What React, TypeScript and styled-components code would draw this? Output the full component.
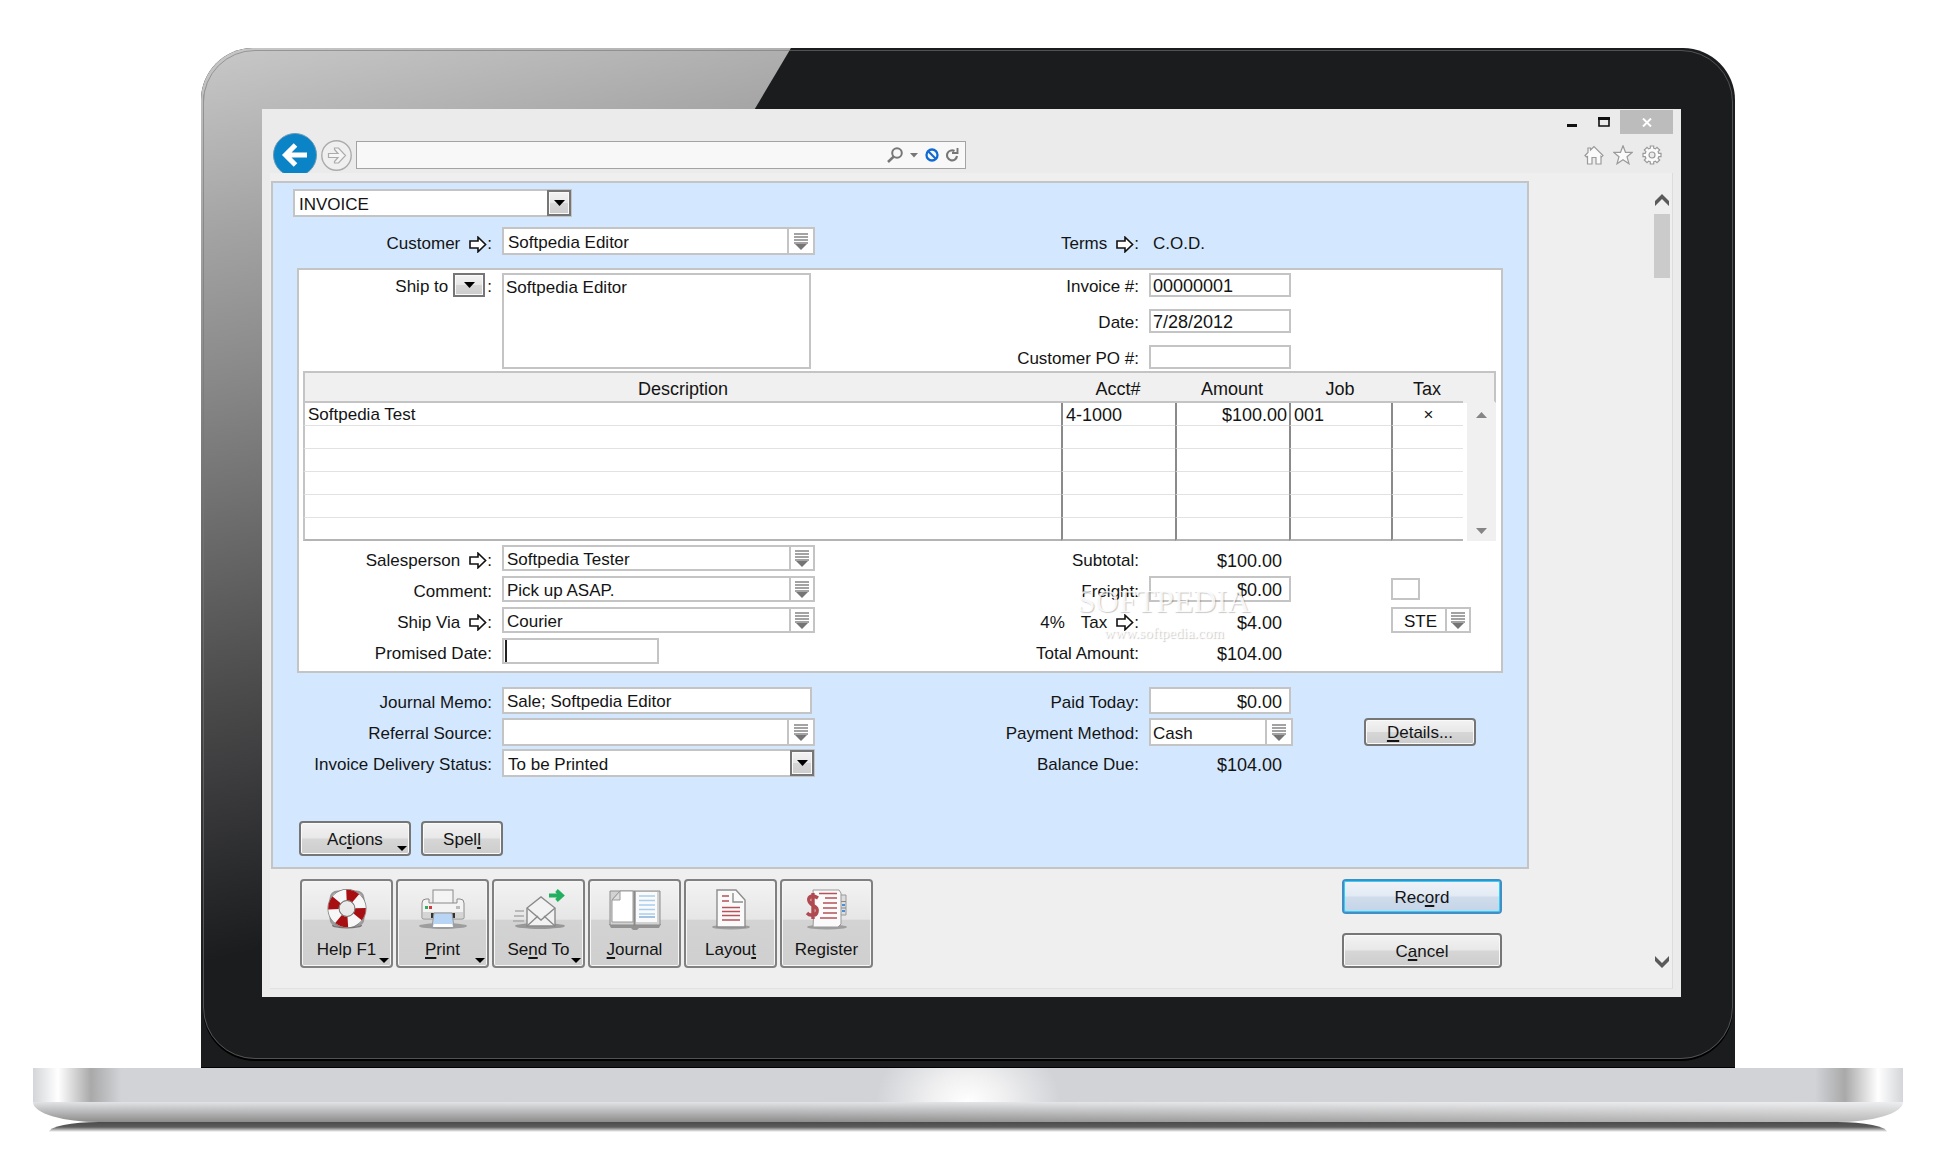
import React from "react";
import styled, { createGlobalStyle, css } from "styled-components";

const line = "#c4c4c4";
const ink = "#141414";

const GlobalStyle = createGlobalStyle`
  *, *::before, *::after { box-sizing: border-box; }
  body {
    margin: 0;
    background: #fff;
    color: ${ink};
    font: 17px/24px "Liberation Sans", Arial, sans-serif;
  }
  button, input, select, textarea { font: inherit; color: inherit; margin: 0; }
  u { text-decoration-thickness: 2px; text-underline-offset: 2px; }
`;

/* ---------- laptop ---------- */

const Page = styled.div`
  padding: 48px 30px 40px 33px;
`;

const Lid = styled.div`
  position: relative;
  margin: 0 168px;
  padding: 61px 54px 70px 61px;
  background: #1b1c1e;
  border: solid #000;
  border-width: 0 0 1px;
  border-radius: 52px 52px 0 0;
`;

const Gloss = styled.div`
  position: absolute;
  inset: 0;
  border-radius: 52px 0 0 0;
  background: linear-gradient(168deg, #c8c8c8 0, #a3a3a4 14%, #8b8b8b 24%, #4c4c4d 48%, #1b1c1e 68%);
  clip-path: polygon(0 0, 590px 0, 0 992px);
`;

const Rim = styled.div`
  position: absolute;
  inset: 2px 2px 8px;
  border: 1px solid #77777799;
  border-radius: 52px;
  box-shadow: 0 2px 0 #000;
`;

const Base = styled.div`
  height: 34px;
  background:
    linear-gradient(90deg, #d3d5d8 0, #fff 25px, #a9a9a9 58px, #d1d3d700 88px) left / 90px 100% no-repeat,
    linear-gradient(270deg, #d3d5d8 0, #fff 25px, #a9a9a9 58px, #d1d3d700 88px) right / 90px 100% no-repeat,
    radial-gradient(ellipse 92px 70px at 50% 100%, #fff 0, #f0f0f1 40%, #d1d3d700 100%),
    #d1d3d7;
`;

const Belly = styled.div`
  height: 20px;
  border-radius: 0 0 66px 66px / 0 0 20px 20px;
  background:
    linear-gradient(90deg, #fff0 40%, #ffffff66 100%),
    linear-gradient(#e2e3e6, #8c8c8c);
`;

const Shade = styled.div`
  height: 10px;
  margin: 0 16px;
  border-radius: 50px 50px 0 0 / 10px 10px 0 0;
  background: linear-gradient(#4b4b4b, #5c5c5c 50%, #fff);
`;

/* ---------- browser window ---------- */

const Window = styled.div`
  position: relative;
  background: #ebebeb;
  padding: 0 8px 8px;
`;

const TitleBar = styled.div`
  display: flex;
  justify-content: flex-end;
  height: 24px;
  padding-top: 1px;
`;

const WindowButton = styled.button<{ $close?: boolean }>`
  display: grid;
  place-items: center;
  width: ${(p) => (p.$close ? 53 : 32)}px;
  height: 24px;
  padding: 0;
  border: 0;
  background: ${(p) => (p.$close ? "#bcbcbc" : "none")};
`;

const NavBar = styled.div`
  height: 40px;
  overflow: hidden;
`;

const NavRow = styled.div`
  display: flex;
  align-items: center;
  gap: 4px;
  height: 44px;
  padding: 0 11px 0 3px;
`;

const BareButton = styled.button`
  display: flex;
  padding: 0;
  border: 0;
  background: none;
`;

const Address = styled.div`
  display: flex;
  align-items: center;
  gap: 7px;
  width: 610px;
  height: 28px;
  padding-right: 6px;
  border: 1px solid #a3a3a3;
  background: #f8f8f8;
`;

const ToolIcons = styled.div`
  display: flex;
  gap: 9px;
  margin-left: auto;
`;

const Viewport = styled.div`
  display: flex;
  justify-content: space-between;
  background: #efefef;
  border-right: 1px solid #dcdcdc;
  border-bottom: 1px solid #e2e2e2;
`;

const Content = styled.main`
  flex: 1;
  margin: 8px 125px 20px 1px;
`;

const ScrollBar = styled.div`
  display: flex;
  flex-direction: column;
  align-items: center;
  width: 18px;
  padding: 21px 2px 20px 0;
`;

const Thumb = styled.div`
  width: 16px;
  height: 64px;
  margin: 8px 0 auto;
  background: #cbcbcb;
`;

/* ---------- form ---------- */

const Panel = styled.form`
  border: 2px solid ${line};
  background: #d3e8fe;
  padding: 6px 0 11px;
`;

const TypeRow = styled.div`
  padding: 0 20px 10px;
`;

const Section = styled.div`
  padding: 0 24px;
`;

const Sheet = styled.div`
  margin: 10px 24px 14px;
  padding: 5px 0 4px;
  background: #fff;
  box-shadow: inset 0 0 0 2px ${line};
`;

const Label = styled.label<{ $right?: boolean }>`
  display: flex;
  align-items: center;
  justify-content: flex-end;
  grid-column: ${(p) => (p.$right ? 3 : 1)};
  white-space: nowrap;
`;

const Grid = styled.div<{ $tight?: boolean; $drop?: boolean }>`
  position: relative;
  display: grid;
  grid-template-columns: 195px 313px minmax(0, 1fr) 144px 200px;
  column-gap: 10px;
  ${(p) =>
    p.$tight
      ? css`grid-auto-rows: 24px; row-gap: 12px;`
      : css`grid-auto-rows: 31px;`}

  ${Label}, output {
    padding-top: ${(p) => (p.$drop ? 3 : 0)}px;
  }
`;

const Cell = styled.div<{ $col: number; $indent?: number; $rows?: number }>`
  grid-column: ${(p) => p.$col};
  grid-row: span ${(p) => p.$rows || 1};
  padding-left: ${(p) => p.$indent || 0}px;
`;

const Frame = styled.div<{ $w?: number; $h: number }>`
  display: flex;
  width: ${(p) => (p.$w ? p.$w + "px" : "100%")};
  height: ${(p) => p.$h}px;
  border: 2px solid ${line};
  background: #fff;
`;

const TextBox = styled.input<{ $figures?: boolean; $end?: boolean; $pad?: number }>`
  flex: 1;
  min-width: 0;
  width: 100%;
  height: 100%;
  padding: 3px ${(p) => (p.$end ? 7 : 0)}px 0 ${(p) => (p.$end ? 0 : p.$pad ?? 3)}px;
  border: 0;
  outline: 0;
  background: none;
  line-height: 20px;
  text-align: ${(p) => (p.$end ? "right" : "left")};
  ${(p) => p.$figures && "font-size: 18px;"}
`;

const ListButton = styled.button<{ $w: number }>`
  display: grid;
  place-items: center;
  width: ${(p) => p.$w}px;
  padding: 0;
  border: 0;
  border-left: 2px solid ${line};
  background: #fff;
`;

const ShipTo = styled.textarea`
  display: block;
  width: 309px;
  height: 96px;
  padding: 1px 2px;
  border: 2px solid ${line};
  outline: 0;
  resize: none;
  background: #fff;
`;

const Caret = styled.span`
  width: 2px;
  margin: 0 0 0 1px;
  background: #222;
`;

const SelectWrap = styled.div<{ $w: number }>`
  position: relative;
  width: ${(p) => p.$w}px;
  height: 28px;

  select {
    appearance: none;
    width: 100%;
    height: 100%;
    padding: 3px 28px 0 4px;
    border: 2px solid ${line};
    border-radius: 0;
    outline: 0;
    background: #fff;
    line-height: 20px;
  }
  span {
    position: absolute;
    right: 1px;
    top: 1px;
    pointer-events: none;
  }
`;

const bevel = css`
  border: 2px solid #767676;
  background: linear-gradient(#f3f3f3, #e8e8e8 48%, #d6d6d6 52%, #cdcdcd);
  box-shadow: inset 0 0 0 1px #fafafa;
`;

const ArrowBox = styled.span`
  display: grid;
  place-items: center;
  width: 24px;
  height: 26px;
  ${bevel}
`;

const ArrowButton = styled.button`
  display: grid;
  place-items: center;
  width: 32px;
  height: 24px;
  padding: 0;
  ${bevel}
`;

const ShipButtonSlot = styled.span`
  margin: -3px 2px 0 5px;
`;

const Figure = styled.output`
  display: flex;
  align-items: center;
  justify-content: flex-end;
  grid-column: 4;
  padding-right: 11px;
  font-size: 18px;
`;

const PlainValue = styled.output`
  display: flex;
  align-items: center;
  grid-column: 4;
  padding-left: 4px;
`;

const TickBox = styled.input`
  display: block;
  appearance: none;
  width: 29px;
  height: 22px;
  margin: 2px 0 0;
  border: 2px solid ${line};
  background: #fff;
`;

const Percent = styled.span`
  margin-right: 16px;
`;

const Watermark = styled.div`
  position: absolute;
  left: 780px;
  top: 38px;
  width: 174px;
  font: 32px/36px "Liberation Serif", serif;
  color: #ffffffdd;
  text-shadow: 1px 1px 1px #00000038;
  text-align: center;
  pointer-events: none;

  small {
    display: block;
    font-size: 15px;
    line-height: 28px;
  }
`;

/* ---------- line items ---------- */

const Items = styled.table`
  width: calc(100% - 13px);
  margin: 2px 7px 4px 6px;
  table-layout: fixed;
  border-spacing: 0;

  th {
    height: 32px;
    padding: 3px 0 0;
    border: solid ${line};
    border-width: 2px 0;
    background: #f0f0f0;
    font-weight: 400;
    font-size: 18px;
    line-height: 24px;
  }
  th:first-child { border-left-width: 2px; }
  th:last-child { border-right-width: 2px; border-bottom-color: #f0f0f0; }
`;

const ItemCell = styled.td<{ $align?: string; $figures?: boolean }>`
  height: 23px;
  padding: 2px 2px 0 3px;
  border-left: 2px solid #8a8a8a;
  border-bottom: 1px solid #e2e2e2;
  line-height: 20px;
  text-align: ${(p) => p.$align || "left"};
  ${(p) => p.$figures && "font-size: 18px;"}

  &:first-child { border-left-color: ${line}; }
  tr:last-child > & { border-bottom: 2px solid #b4b4b4; }
`;

const ScrollCell = styled.td`
  padding: 0 0 0 4px;
  height: 1px;
`;

const ItemScroll = styled.div`
  display: flex;
  flex-direction: column;
  justify-content: space-between;
  align-items: center;
  height: 138px;
  padding: 9px 0 7px;
  background: #f0f0f0;
`;

/* ---------- buttons ---------- */

const PushButton = styled.button<{ $w: number; $h?: number; $primary?: boolean }>`
  position: relative;
  width: ${(p) => p.$w}px;
  height: ${(p) => p.$h || 35}px;
  padding: 2px 0 0;
  border-radius: 4px;
  line-height: 22px;
  ${bevel}
  ${(p) =>
    p.$primary &&
    css`
      border-color: #3f8fc4;
      background: linear-gradient(#f0f3f8, #e2eaf3 48%, #cfdcec 52%, #c4d4e7);
      box-shadow: inset 0 0 0 1px #2fd0fb;
    `}
`;

const ToolButton = styled.button`
  position: relative;
  display: flex;
  flex-direction: column;
  align-items: center;
  gap: 8px;
  width: 93px;
  height: 89px;
  padding: 7px 0 0;
  border: 2px solid #808080;
  border-radius: 4px;
  background: linear-gradient(#f3f3f3, #e6e6e6 45%, #d3d3d3 46%, #cfcfcf);
  box-shadow: inset 0 0 0 1px #f6f6f6;
`;

const MenuMark = styled.i`
  position: absolute;
  right: 2px;
  bottom: 3px;
  border: solid transparent;
  border-width: 5px 5px 0;
  border-top-color: #000;
`;

const FormButtons = styled.div`
  display: flex;
  gap: 10px;
  padding: 41px 26px 0;
`;

const Footer = styled.div`
  display: flex;
  justify-content: space-between;
  padding: 10px 27px 0 29px;
`;

const Tools = styled.div`
  display: flex;
  gap: 3px;
`;

const Decisions = styled.div`
  display: flex;
  flex-direction: column;
  justify-content: space-between;
`;

/* ---------- drawings ---------- */

const JumpArrow = styled.svg`
  margin-left: 9px;
`;

const Down = () => (
  <svg width="11" height="6" viewBox="0 0 11 6"><path d="M0 0H11L5.5 6Z" fill="#000" /></svg>
);

const Jump = () => (
  <JumpArrow width="18" height="17" viewBox="0 0 18 17">
    <path d="M1 5H9V1.2L16.6 8.5L9 15.8V12H1Z" fill="#fff" stroke="#111" strokeWidth="1.6" />
  </JumpArrow>
);

const ListMark = () => (
  <svg width="14" height="17" viewBox="0 0 14 17">
    <path d="M0 1H14M0 4H14M0 7H14M0 10H14" stroke="#858585" strokeWidth="1.4" />
    <path d="M1 11H13L7 17Z" fill="#757575" />
  </svg>
);

const Chevron = ({ down }: { down?: boolean }) => (
  <svg width="14" height="12" viewBox="0 0 14 12">
    <path d={down ? "M0 0V5L7 12L14 5V0L7 7Z" : "M0 12V7L7 0L14 7V12L7 5Z"} fill="#5a5a5a" />
  </svg>
);

const HelpIcon = () => (
  <svg width="52" height="42" viewBox="0 0 52 42">
    <ellipse cx="26" cy="37.5" rx="15" ry="3" fill="#000" opacity=".45" />
    <rect x="9.5" y="3.5" width="33" height="34" rx="7" fill="none" stroke="#999" strokeWidth="2" />
    <circle cx="26" cy="20.500" r="13.500" fill="none" stroke="#777" strokeWidth="12" />
    <circle cx="26" cy="20.500" r="13.500" fill="none" stroke="#f7f7f7" strokeWidth="10.600" />
    <circle cx="26" cy="20.500" r="13.500" fill="none" stroke="#a80f12" strokeWidth="10.600" strokeDasharray="10 11.206" strokeDashoffset="1" />
    <circle cx="26" cy="20.500" r="8" fill="none" stroke="#777" strokeWidth=".8" />
  </svg>
);

const PrintIcon = () => (
  <svg width="52" height="42" viewBox="0 0 52 42">
    <ellipse cx="26" cy="38" rx="24" ry="3" fill="#000" opacity=".25" />
    <rect x="16" y="2" width="20" height="14" fill="#f4f4f4" stroke="#8a8a8a" />
    <path d="M5 15Q5 11 9 11H12V15H40V11H43Q47 11 47 15V30Q47 31 45 31H7Q5 31 5 30Z" fill="#f3f3f3" stroke="#8a8a8a" />
    <path d="M6 24H46V30H6Z" fill="#d5d5d5" />
    <rect x="14" y="25" width="24" height="5" fill="#333" />
    <path d="M17 25H35L37 39H15Z" fill="#b8d5f5" stroke="#999" />
    <path d="M17 36H35L36 39H16Z" fill="#fff" />
    <rect x="8" y="18" width="3" height="3" fill="#2fae62" />
    <rect x="12" y="18" width="3" height="3" fill="#d23b3b" />
    <rect x="39" y="18" width="4" height="3" fill="#bbb" />
  </svg>
);

const SendIcon = () => (
  <svg width="52" height="42" viewBox="0 0 52 42">
    <ellipse cx="27" cy="38" rx="25" ry="3" fill="#000" opacity=".28" />
    <path d="M2 23H11M1 28H11M0 33H11" stroke="#aaa" strokeWidth="1.5" />
    <path d="M14 20L28 9L42 20V38H14Z" fill="#f2f2f2" stroke="#8a8a8a" strokeWidth="1.4" />
    <path d="M14 20L28 32L42 20M14 38L25 28M42 38L31 28" fill="none" stroke="#8a8a8a" strokeWidth="1.4" />
    <path d="M36 7.500H49M43.500 2.500L49 7.500L43.500 12.500" fill="none" stroke="#22b060" strokeWidth="3.800" />
  </svg>
);

const JournalIcon = () => (
  <svg width="52" height="42" viewBox="0 0 52 42">
    <path d="M0 36H52L50 40H30L28 42H24L22 40H2Z" fill="#000" opacity=".3" />
    <path d="M1 3H51V37H1Z" fill="#d2d2d2" stroke="#8d8d8d" />
    <path d="M11 3H24V34H3V12Z" fill="#fff" stroke="#999" />
    <path d="M11 3V12H3Z" fill="#ddd" stroke="#999" />
    <path d="M27 4H48V34H27Z" fill="#fafafa" />
    <path d="M25.500 3V38" stroke="#8a8a8a" strokeWidth="2" />
    <path d="M30 8H46M30 12.500H46M30 17H46M30 21.500H46M30 26H46" stroke="#a9cdee" strokeWidth="1.6" />
    <path d="M30 29H46" stroke="#8fb6de" strokeWidth="1.6" />
  </svg>
);

const LayoutIcon = () => (
  <svg width="52" height="42" viewBox="0 0 52 42">
    <ellipse cx="26" cy="39" rx="19" ry="2.500" fill="#000" opacity=".25" />
    <path d="M12 2H31L40 12V39H12Z" fill="#fafafa" stroke="#8d8d8d" strokeWidth="1.4" />
    <path d="M28 5V14H38" fill="none" stroke="#8d8d8d" strokeWidth="1.4" />
    <path d="M17 8H24M17 13H24M17 19.500H35M17 23.500H35M17 27.500H35M17 32H35" stroke="#b5525a" strokeWidth="1.600" />
  </svg>
);

const RegisterIcon = () => (
  <svg width="52" height="42" viewBox="0 0 52 42">
    <ellipse cx="26" cy="39" rx="20" ry="2.500" fill="#000" opacity=".25" />
    <path d="M39 7H45V27H39Z" fill="#ddd" stroke="#999" />
    <path d="M39 13.500H45M39 20H45" stroke="#888" />
    <path d="M41 17H44M41 23H44" stroke="#4a90d9" strokeWidth="2" />
    <path d="M12 2H38L40 5V36L37 39H12L13 20Z" fill="#fafafa" stroke="#999" />
    <path d="M18 5.500H36M24 10H36M22 15H36M22 20H36M22 25H36M19 30H36" stroke="#b5525a" strokeWidth="1.700" />
    <path d="M17 10Q14 8 11 8Q7 9 8 13Q9 16 13 18Q17 20 16 24Q15 28 10 27Q8 27 6 25M12 5V31" fill="none" stroke="#b04a50" strokeWidth="3.400" />
  </svg>
);

/* ---------- parts ---------- */

function Combo(p: { id: string; value?: string; w?: number; h: number; name?: string; pad?: number }) {
  return (
    <Frame $w={p.w} $h={p.h}>
      <TextBox id={p.id} defaultValue={p.value} aria-label={p.name} $pad={p.pad} />
      <ListButton type="button" aria-label="Open list" $w={p.h - 2}><ListMark /></ListButton>
    </Frame>
  );
}

const tools = [
  { icon: <HelpIcon />, text: <>Help F1</>, menu: true },
  { icon: <PrintIcon />, text: <><u>P</u>rint</>, menu: true },
  { icon: <SendIcon />, text: <>Se<u>n</u>d To</>, menu: true },
  { icon: <JournalIcon />, text: <><u>J</u>ournal</> },
  { icon: <LayoutIcon />, text: <>Layou<u>t</u></> },
  { icon: <RegisterIcon />, text: <>Re<u>g</u>ister</> },
];

function BrowserChrome() {
  return (
    <>
      <TitleBar>
        <WindowButton aria-label="Minimize">
          <svg width="10" height="12"><path d="M0 9.500H10" stroke="#111" strokeWidth="3" /></svg>
        </WindowButton>
        <WindowButton aria-label="Maximize">
          <svg width="12" height="10"><path d="M1 0V9H11V0" fill="none" stroke="#111" strokeWidth="1.600" /><path d="M0 1.500H12" stroke="#111" strokeWidth="3" /></svg>
        </WindowButton>
        <WindowButton $close aria-label="Close">
          <svg width="10" height="9"><path d="M1 .5L9 8.500M9 .5L1 8.500" stroke="#fff" strokeWidth="2" /></svg>
        </WindowButton>
      </TitleBar>
      <NavBar>
        <NavRow>
          <BareButton aria-label="Back">
            <svg width="44" height="44" viewBox="0 0 44 44">
              <circle cx="22" cy="22" r="21.500" fill="#0a84c6" stroke="#6b9ab5" />
              <path d="M34 22H13M22.500 12L12.500 22L22.500 32" fill="none" stroke="#fff" strokeWidth="5" />
            </svg>
          </BareButton>
          <BareButton aria-label="Forward">
            <svg width="31" height="31" viewBox="0 0 31 31">
              <circle cx="15.500" cy="15.500" r="14.700" fill="#efefef" stroke="#ababab" strokeWidth="1.400" />
              <path d="M7.500 13.500H17L13.500 9.500V8H17.500L24.500 15.500L17.500 23H13.500V21.500L17 17.500H7.500Z" fill="#f5f5f5" stroke="#ababab" strokeWidth="1.200" />
            </svg>
          </BareButton>
          <Address>
            <TextBox aria-label="Address" />
            <BareButton aria-label="Search">
              <svg width="16" height="16" viewBox="0 0 16 16"><circle cx="10" cy="6" r="4.800" fill="none" stroke="#777" strokeWidth="2" /><path d="M6.800 9.500L1 15" stroke="#777" strokeWidth="2.500" /></svg>
            </BareButton>
            <BareButton aria-label="Search options">
              <svg width="8" height="5"><path d="M0 0H8L4 4.500Z" fill="#777" /></svg>
            </BareButton>
            <BareButton aria-label="Compatibility">
              <svg width="14" height="14" viewBox="0 0 14 14"><circle cx="7" cy="7" r="5.500" fill="none" stroke="#1169d4" strokeWidth="2.300" /><path d="M3 3L11 11" stroke="#1169d4" strokeWidth="2.200" /></svg>
            </BareButton>
            <BareButton aria-label="Refresh">
              <svg width="13" height="14" viewBox="0 0 13 14"><path d="M8.500 3A5 5 0 1 0 11 8" fill="none" stroke="#777" strokeWidth="2.100" /><path d="M6 5H11.500V0" fill="none" stroke="#777" strokeWidth="1.900" /></svg>
            </BareButton>
          </Address>
          <ToolIcons>
            <BareButton aria-label="Home">
              <svg width="20" height="20" viewBox="0 0 20 20"><path d="M1 10.500L4 7.500V3H6.500V5L10 1.500L19 10.500L17.500 12L17 11.500V19H12V12.500H8V19H3.500V11.500L2.500 12Z" fill="#fafafa" stroke="#9a9a9a" strokeWidth="1.200" /></svg>
            </BareButton>
            <BareButton aria-label="Favorites">
              <svg width="20" height="20" viewBox="0 0 20 20"><path d="M10 .8L12.500 7.300H19.400L14 11.700L16 18.800L10 14.800L4 18.800L6 11.700L.6 7.300H7.500Z" fill="#fafafa" stroke="#9a9a9a" strokeWidth="1.200" /></svg>
            </BareButton>
            <BareButton aria-label="Settings">
              <svg width="20" height="20" viewBox="0 0 20 20">
                <path d="M8.300 1H11.700V3.200L13.400 3.900L15 2.300L17.700 5L16.100 6.600L16.800 8.300H19V11.700H16.800L16.100 13.400L17.700 15L15 17.700L13.400 16.100L11.700 16.800V19H8.300V16.800L6.600 16.100L5 17.700L2.300 15L3.900 13.400L3.200 11.700H1V8.300H3.200L3.900 6.600L2.300 5L5 2.300L6.600 3.900L8.300 3.200Z" fill="#fafafa" stroke="#9a9a9a" strokeWidth="1.200" />
                <circle cx="10" cy="10" r="3" fill="#ebebeb" stroke="#9a9a9a" strokeWidth="1.200" />
              </svg>
            </BareButton>
          </ToolIcons>
        </NavRow>
      </NavBar>
    </>
  );
}

function LineItems() {
  return (
    <Items>
      <colgroup>
        <col />
        <col width="114" />
        <col width="114" />
        <col width="102" />
        <col width="72" />
        <col width="33" />
      </colgroup>
      <thead>
        <tr><th>Description</th><th>Acct#</th><th>Amount</th><th>Job</th><th>Tax</th><th /></tr>
      </thead>
      <tbody>
        <tr>
          <ItemCell>Softpedia Test</ItemCell>
          <ItemCell $figures>4-1000</ItemCell>
          <ItemCell $figures $align="right">$100.00</ItemCell>
          <ItemCell $figures>001</ItemCell>
          <ItemCell $align="center">×</ItemCell>
          <ScrollCell rowSpan={6}>
            <ItemScroll>
              <svg width="11" height="6"><path d="M0 6H11L5.500 0Z" fill="#858585" /></svg>
              <svg width="11" height="6"><path d="M0 0H11L5.500 6Z" fill="#858585" /></svg>
            </ItemScroll>
          </ScrollCell>
        </tr>
        {[1, 2, 3, 4, 5].map((n) => (
          <tr key={n}>
            <ItemCell /><ItemCell /><ItemCell /><ItemCell /><ItemCell />
          </tr>
        ))}
      </tbody>
    </Items>
  );
}

export default function App() {
  return (
    <Page>
      <GlobalStyle />
      <Lid>
        <Gloss />
        <Rim />
        <Window>
          <BrowserChrome />
          <Viewport>
            <Content>
              <Panel>
                <TypeRow>
                  <SelectWrap $w={279}>
                    <select aria-label="Sale type"><option>INVOICE</option></select>
                    <ArrowBox><Down /></ArrowBox>
                  </SelectWrap>
                </TypeRow>
                <Section>
                  <Grid $drop>
                    <Label htmlFor="customer">Customer<Jump />:</Label>
                    <Cell $col={2}><Combo id="customer" value="Softpedia Editor" h={28} pad={4} /></Cell>
                    <Label as="span" $right>Terms<Jump />:</Label>
                    <PlainValue>C.O.D.</PlainValue>
                  </Grid>
                </Section>

                <Sheet>
                  <Grid $tight $drop>
                    <Label htmlFor="shipto">
                      Ship to
                      <ShipButtonSlot>
                        <ArrowButton type="button" aria-label="Choose address"><Down /></ArrowButton>
                      </ShipButtonSlot>
                      :
                    </Label>
                    <Cell $col={2} $rows={3}><ShipTo id="shipto" defaultValue="Softpedia Editor" /></Cell>
                    <Label $right htmlFor="number">Invoice #:</Label>
                    <Frame $w={142} $h={24}><TextBox id="number" $figures defaultValue="00000001" $pad={2} /></Frame>
                    <Label $right htmlFor="date">Date:</Label>
                    <Frame $w={142} $h={24}><TextBox id="date" $figures defaultValue="7/28/2012" $pad={2} /></Frame>
                    <Label $right htmlFor="po">Customer PO #:</Label>
                    <Frame $w={142} $h={24}><TextBox id="po" /></Frame>
                  </Grid>

                  <LineItems />

                  <Grid>
                    <Label htmlFor="salesperson">Salesperson<Jump />:</Label>
                    <Cell $col={2}><Combo id="salesperson" value="Softpedia Tester" h={26} /></Cell>
                    <Label as="span" $right>Subtotal:</Label>
                    <Figure>$100.00</Figure>

                    <Label htmlFor="comment">Comment:</Label>
                    <Cell $col={2}><Combo id="comment" value="Pick up ASAP." h={26} /></Cell>
                    <Label $right htmlFor="freight">Freight:</Label>
                    <Cell $col={4}><Frame $w={142} $h={26}><TextBox id="freight" $figures $end defaultValue="$0.00" /></Frame></Cell>
                    <Cell $col={5} $indent={88}><TickBox type="checkbox" aria-label="Freight is taxed" /></Cell>

                    <Label htmlFor="via">Ship Via<Jump />:</Label>
                    <Cell $col={2}><Combo id="via" value="Courier" h={26} /></Cell>
                    <Label as="span" $right><Percent>4%</Percent>Tax<Jump />:</Label>
                    <Figure>$4.00</Figure>
                    <Cell $col={5} $indent={88}><Combo id="taxcode" name="Tax code" value="STE" w={80} h={26} pad={11} /></Cell>

                    <Label htmlFor="promised">Promised Date:</Label>
                    <Cell $col={2}><Frame $w={157} $h={26}><Caret /><TextBox id="promised" /></Frame></Cell>
                    <Label as="span" $right>Total Amount:</Label>
                    <Figure>$104.00</Figure>
                    <Watermark>SOFTPEDIA<small>www.softpedia.com</small></Watermark>
                  </Grid>
                </Sheet>

                <Section>
                  <Grid>
                    <Label htmlFor="memo">Journal Memo:</Label>
                    <Cell $col={2}><Frame $w={310} $h={27}><TextBox id="memo" defaultValue="Sale; Softpedia Editor" /></Frame></Cell>
                    <Label $right htmlFor="paid">Paid Today:</Label>
                    <Cell $col={4}><Frame $w={142} $h={27}><TextBox id="paid" $figures $end defaultValue="$0.00" /></Frame></Cell>

                    <Label htmlFor="referral">Referral Source:</Label>
                    <Cell $col={2}><Combo id="referral" h={28} /></Cell>
                    <Label $right htmlFor="method">Payment Method:</Label>
                    <Cell $col={4}><Combo id="method" value="Cash" h={28} pad={2} /></Cell>
                    <Cell $col={5} $indent={61}><PushButton type="button" $w={112} $h={28}><u>D</u>etails...</PushButton></Cell>

                    <Label htmlFor="status">Invoice Delivery Status:</Label>
                    <Cell $col={2}>
                      <SelectWrap $w={313}>
                        <select id="status"><option>To be Printed</option></select>
                        <ArrowBox><Down /></ArrowBox>
                      </SelectWrap>
                    </Cell>
                    <Label as="span" $right>Balance Due:</Label>
                    <Figure>$104.00</Figure>
                  </Grid>
                </Section>

                <FormButtons>
                  <PushButton type="button" $w={112}>Ac<u>t</u>ions<MenuMark /></PushButton>
                  <PushButton type="button" $w={82}>Spel<u>l</u></PushButton>
                </FormButtons>
              </Panel>

              <Footer>
                <Tools>
                  {tools.map((t, i) => (
                    <ToolButton key={i} type="button">{t.icon}<span>{t.text}</span>{t.menu && <MenuMark />}</ToolButton>
                  ))}
                </Tools>
                <Decisions>
                  <PushButton type="button" $w={160} $primary>Rec<u>o</u>rd</PushButton>
                  <PushButton type="button" $w={160}>C<u>a</u>ncel</PushButton>
                </Decisions>
              </Footer>
            </Content>
            <ScrollBar>
              <Chevron />
              <Thumb />
              <Chevron down />
            </ScrollBar>
          </Viewport>
        </Window>
      </Lid>
      <Base />
      <Belly />
      <Shade />
    </Page>
  );
}
